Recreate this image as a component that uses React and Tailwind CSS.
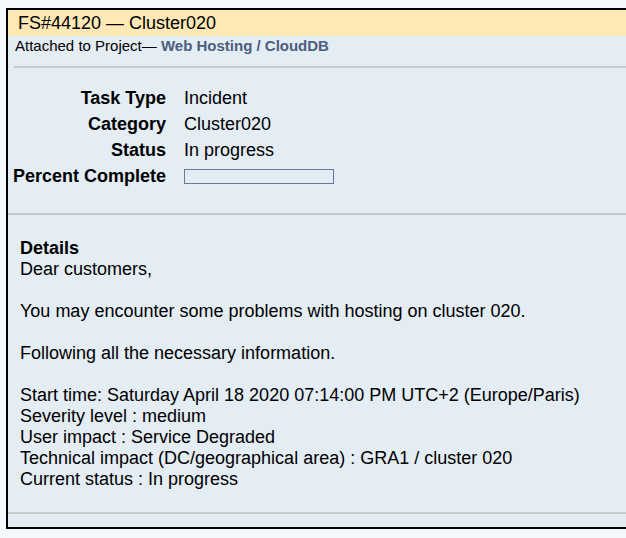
export default function App() {
  const rows = [
    ["Task Type", "Incident"],
    ["Category", "Cluster020"],
    ["Status", "In progress"],
  ];

  return (
    <div className="min-h-[538px] bg-[#f4f8fb] pt-2 pl-[6px] font-['Liberation_Sans',Arial,sans-serif] text-black">
      <div className="w-[640px] border-2 border-r-0 border-black bg-[#e4ecf4]">
        {/* title */}
        <div className="h-[26px] bg-[#fee8b6] pl-[10px] text-[18px] leading-[26px]">
          FS#44120 — Cluster020
        </div>
        <div className="pl-[7px] pt-[1px] text-[15px] leading-[17px]">
          Attached to Project— <span className="font-bold text-[#4b5e7e]">Web Hosting / CloudDB</span>
        </div>
        <div className="ml-[6px] mt-[12px] h-[2px] bg-[#c6cacd]" />

        {/* properties */}
        <div className="pt-[17px] pb-[24px]">
          {rows.map(([k, v]) => (
            <div key={k} className="flex h-[26px] items-center text-[18px]">
              <div className="w-[158px] text-right font-bold">{k}</div>
              <div className="pl-[18px]">{v}</div>
            </div>
          ))}
          <div className="flex h-[26px] items-center text-[18px]">
            <div className="w-[158px] text-right font-bold">Percent Complete</div>
            <div className="ml-[18px] h-[15px] w-[150px] border border-[#6b7893] bg-[#e3ebf5]" />
          </div>
        </div>
        <div className="h-[2px] bg-[#c6cacd]" />

        {/* details */}
        <div className="pl-[12px] pt-[23px] pb-[22px] text-[18px] leading-[21px]">
          <div className="font-bold">Details</div>
          <div>Dear customers,</div>
          <div className="h-[21px]" />
          <div>You may encounter some problems with hosting on cluster 020.</div>
          <div className="h-[21px]" />
          <div>Following all the necessary information.</div>
          <div className="h-[21px]" />
          <div>Start time: Saturday April 18 2020 07:14:00 PM UTC+2 (Europe/Paris)</div>
          <div>Severity level : medium</div>
          <div>User impact : Service Degraded</div>
          <div>Technical impact (DC/geographical area) : GRA1 / cluster 020</div>
          <div>Current status : In progress</div>
        </div>
        <div className="h-[2px] bg-[#c6cacd]" />
        <div className="h-[13px] bg-[#e3ecf5]" />
      </div>
    </div>
  );
}
